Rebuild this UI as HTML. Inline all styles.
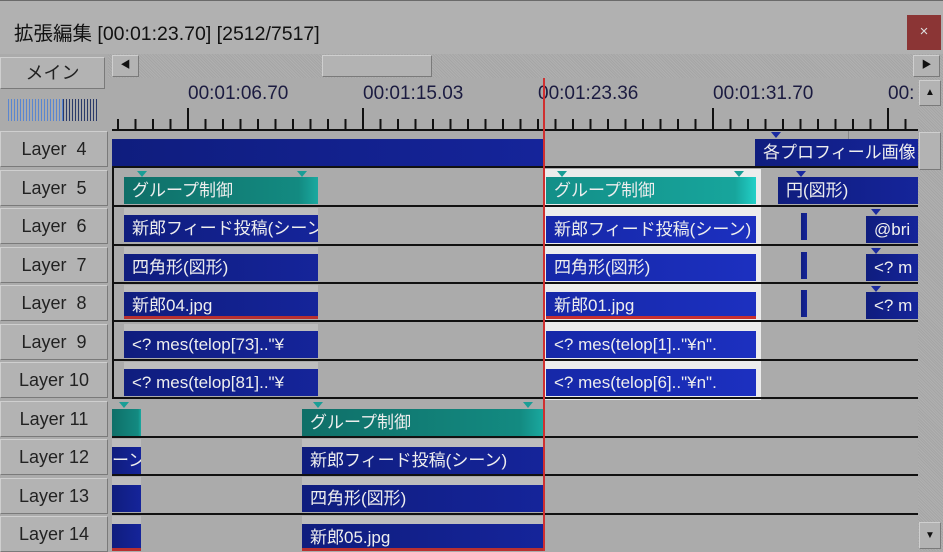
<!DOCTYPE html>
<html><head><meta charset="utf-8"><style>
*{margin:0;padding:0;box-sizing:border-box}
body{width:943px;height:551px;overflow:hidden;background:#ababab;font-family:"Liberation Sans","Noto Sans CJK JP",sans-serif;position:relative}
.a{position:absolute}
.title{left:0;top:0;width:943px;height:54px;background:#b1b1b1;border-top:1px solid #6a6a6a}
.tt{left:14px;top:17px;font-size:19.5px;color:#111}
.close{left:907px;top:15px;width:34px;height:35px;background:#8b3535;color:#ddd;font-size:15px;text-align:center;line-height:34px}
.hatch{background:repeating-linear-gradient(45deg,#a5a5a5 0 1px,#b0b0b0 1px 2px)}
.btn{background:#b3b3b3;border:1px solid;border-color:#cfcfcf #7a7a7a #7a7a7a #cfcfcf;color:#111}
.lay{left:0;width:108px;height:36px;font-size:18px;color:#222;text-align:center;line-height:34px;white-space:pre}
.ob{height:27px;color:#eee;font-size:17px;line-height:27px;padding-left:8px;white-space:nowrap;overflow:hidden;background:linear-gradient(90deg,#0f1d7e,#15249a)}
.sb{background:linear-gradient(90deg,#1628a8,#1c30c0)}
.tl{background:linear-gradient(90deg,#0f6f68,#138a81 90%,#1aa9a0)}
.ts{background:linear-gradient(90deg,#138f88,#17a59c 90%,#22d0c8)}
.band{background:#bdbdbd;height:8px}
.rl{left:112px;width:806px;height:2px;background:#111}
.lbl{top:83px;font-size:19px;color:#1b1b40}
.tri{width:0;height:0;border-left:5px solid transparent;border-right:5px solid transparent;border-top:6px solid #1a9e96}
.trb{border-top-color:#1a2aa0}
</style></head><body>
<div class="a title"></div>
<div class="a tt">拡張編集 [00:01:23.70] [2512/7517]</div>
<div class="a close">×</div>
<div class="a hatch" style="left:108px;top:54px;width:835px;height:24px"></div>
<div class="a btn" style="left:0;top:57px;width:105px;height:32px;font-size:18px;text-align:center;line-height:30px;color:#222">メイン</div>
<div class="a btn" style="left:112px;top:55px;width:27px;height:22px;font-size:10px;text-align:center;line-height:20px">◀</div>
<div class="a btn" style="left:322px;top:55px;width:110px;height:22px"></div>
<div class="a btn" style="left:913px;top:55px;width:27px;height:22px;font-size:10px;text-align:center;line-height:20px">▶</div>
<div class="a" style="left:8px;top:99px;width:90px;height:22px;background:repeating-linear-gradient(90deg,#5a86d0 0 1px,transparent 1px 3px)"></div>
<div class="a" style="left:63px;top:99px;width:35px;height:22px;background:repeating-linear-gradient(90deg,#2a3a6a 0 1px,#ababab 1px 3px)"></div>
<div class="a lbl" style="left:188px">00:01:06.70</div>
<div class="a lbl" style="left:363px">00:01:15.03</div>
<div class="a lbl" style="left:538px">00:01:23.36</div>
<div class="a lbl" style="left:713px">00:01:31.70</div>
<div class="a lbl" style="left:888px">00:</div>
<div class="a" style="left:112px;top:129px;width:806px;height:2px;background:#111"></div>
<div class="a" style="left:117px;top:119px;width:801px;height:10px;background:repeating-linear-gradient(90deg,#111 0 2px,transparent 2px 17.5px)"></div>
<div class="a" style="left:187px;top:108px;width:2px;height:21px;background:#111"></div>
<div class="a" style="left:362px;top:108px;width:2px;height:21px;background:#111"></div>
<div class="a" style="left:712px;top:108px;width:2px;height:21px;background:#111"></div>
<div class="a" style="left:887px;top:108px;width:2px;height:21px;background:#111"></div>
<div class="a hatch" style="left:918px;top:78px;width:25px;height:473px"></div>
<div class="a btn" style="left:919px;top:80px;width:22px;height:26px;font-size:10px;text-align:center;line-height:24px">▲</div>
<div class="a btn" style="left:919px;top:132px;width:22px;height:38px"></div>
<div class="a btn" style="left:919px;top:522px;width:22px;height:27px;font-size:10px;text-align:center;line-height:25px">▼</div>
<div class="a" style="left:544px;top:169px;width:217px;height:231px;background:#ececec"></div>
<div class="a" style="left:112px;top:167px;width:2px;height:231px;background:#111"></div>
<div class="a btn lay" style="top:131px">Layer  4</div>
<div class="a btn lay" style="top:169.5px">Layer  5</div>
<div class="a btn lay" style="top:208px">Layer  6</div>
<div class="a btn lay" style="top:246.5px">Layer  7</div>
<div class="a btn lay" style="top:285px">Layer  8</div>
<div class="a btn lay" style="top:323.5px">Layer  9</div>
<div class="a btn lay" style="top:362px">Layer 10</div>
<div class="a btn lay" style="top:400.5px">Layer 11</div>
<div class="a btn lay" style="top:439px">Layer 12</div>
<div class="a btn lay" style="top:477.5px">Layer 13</div>
<div class="a btn lay" style="top:516px">Layer 14</div>
<div class="a rl" style="top:166px"></div><div class="a rl" style="top:205px"></div><div class="a rl" style="top:244px"></div><div class="a rl" style="top:282px"></div><div class="a rl" style="top:320px"></div><div class="a rl" style="top:359px"></div><div class="a rl" style="top:397px"></div><div class="a rl" style="top:436px"></div><div class="a rl" style="top:474px"></div><div class="a rl" style="top:513px"></div>
<div class="a ob" style="left:112px;top:139px;width:432px"></div>
<div class="a ob" style="left:755px;top:139px;width:163px">各プロフィール画像</div>
<div class="a tri trb" style="left:771px;top:132px"></div>
<div class="a" style="left:848px;top:131px;width:1px;height:8px;background:#888"></div>
<div class="a ob tl" style="left:124px;top:177px;width:194px">グループ制御</div>
<div class="a tri" style="left:137px;top:171px"></div><div class="a tri" style="left:297px;top:171px"></div>
<div class="a band" style="left:124px;top:208px;width:194px"></div>
<div class="a ob" style="left:124px;top:215px;width:194px">新郎フィード投稿(シーン)</div>
<div class="a band" style="left:124px;top:247px;width:194px"></div>
<div class="a ob" style="left:124px;top:254px;width:194px">四角形(図形)</div>
<div class="a band" style="left:124px;top:285px;width:194px"></div>
<div class="a ob" style="left:124px;top:292px;width:194px;border-bottom:3px solid #b83030">新郎04.jpg</div>
<div class="a band" style="left:124px;top:324px;width:194px"></div>
<div class="a ob" style="left:124px;top:331px;width:194px">&lt;? mes(telop[73].."¥</div>
<div class="a band" style="left:124px;top:362px;width:194px"></div>
<div class="a ob" style="left:124px;top:369px;width:194px">&lt;? mes(telop[81].."¥</div>
<div class="a ob ts" style="left:546px;top:177px;width:210px">グループ制御</div>
<div class="a tri" style="left:557px;top:171px"></div><div class="a tri" style="left:734px;top:171px"></div>
<div class="a ob sb" style="left:546px;top:216px;width:210px">新郎フィード投稿(シーン)</div>
<div class="a ob sb" style="left:546px;top:254px;width:210px">四角形(図形)</div>
<div class="a ob sb" style="left:546px;top:292px;width:210px;border-bottom:3px solid #c83030">新郎01.jpg</div>
<div class="a ob sb" style="left:546px;top:331px;width:210px">&lt;? mes(telop[1].."¥n".</div>
<div class="a ob sb" style="left:546px;top:369px;width:210px">&lt;? mes(telop[6].."¥n".</div>
<div class="a ob" style="left:778px;top:177px;width:140px">円(図形)</div>
<div class="a tri trb" style="left:796px;top:171px"></div>
<div class="a ob" style="left:801px;top:213px;width:6px;padding:0"></div>
<div class="a ob" style="left:801px;top:252px;width:6px;padding:0"></div>
<div class="a ob" style="left:801px;top:290px;width:6px;padding:0"></div>
<div class="a ob" style="left:866px;top:216px;width:52px">@bri</div>
<div class="a ob" style="left:866px;top:254px;width:52px">&lt;? m</div>
<div class="a ob" style="left:866px;top:292px;width:52px">&lt;? m</div>
<div class="a tri trb" style="left:871px;top:209px"></div><div class="a tri trb" style="left:871px;top:248px"></div><div class="a tri trb" style="left:871px;top:286px"></div>
<div class="a ob tl" style="left:112px;top:409px;width:29px;padding:0"></div>
<div class="a tri" style="left:119px;top:402px"></div>
<div class="a ob tl" style="left:302px;top:409px;width:242px">グループ制御</div>
<div class="a tri" style="left:313px;top:402px"></div><div class="a tri" style="left:523px;top:402px"></div>
<div class="a band" style="left:112px;top:439px;width:29px"></div>
<div class="a band" style="left:302px;top:439px;width:242px"></div>
<div class="a ob" style="left:112px;top:447px;width:29px;padding:0">ーン</div>
<div class="a ob" style="left:302px;top:447px;width:242px">新郎フィード投稿(シーン)</div>
<div class="a band" style="left:112px;top:477px;width:29px"></div>
<div class="a band" style="left:302px;top:477px;width:242px"></div>
<div class="a ob" style="left:112px;top:485px;width:29px"></div>
<div class="a ob" style="left:302px;top:485px;width:242px">四角形(図形)</div>
<div class="a band" style="left:112px;top:516px;width:29px"></div>
<div class="a band" style="left:302px;top:516px;width:242px"></div>
<div class="a ob" style="left:112px;top:524px;width:29px;border-bottom:3px solid #b83030"></div>
<div class="a ob" style="left:302px;top:524px;width:242px;border-bottom:3px solid #b83030">新郎05.jpg</div>
<div class="a" style="left:543px;top:78px;width:2px;height:473px;background:#d03030"></div>
</body></html>
